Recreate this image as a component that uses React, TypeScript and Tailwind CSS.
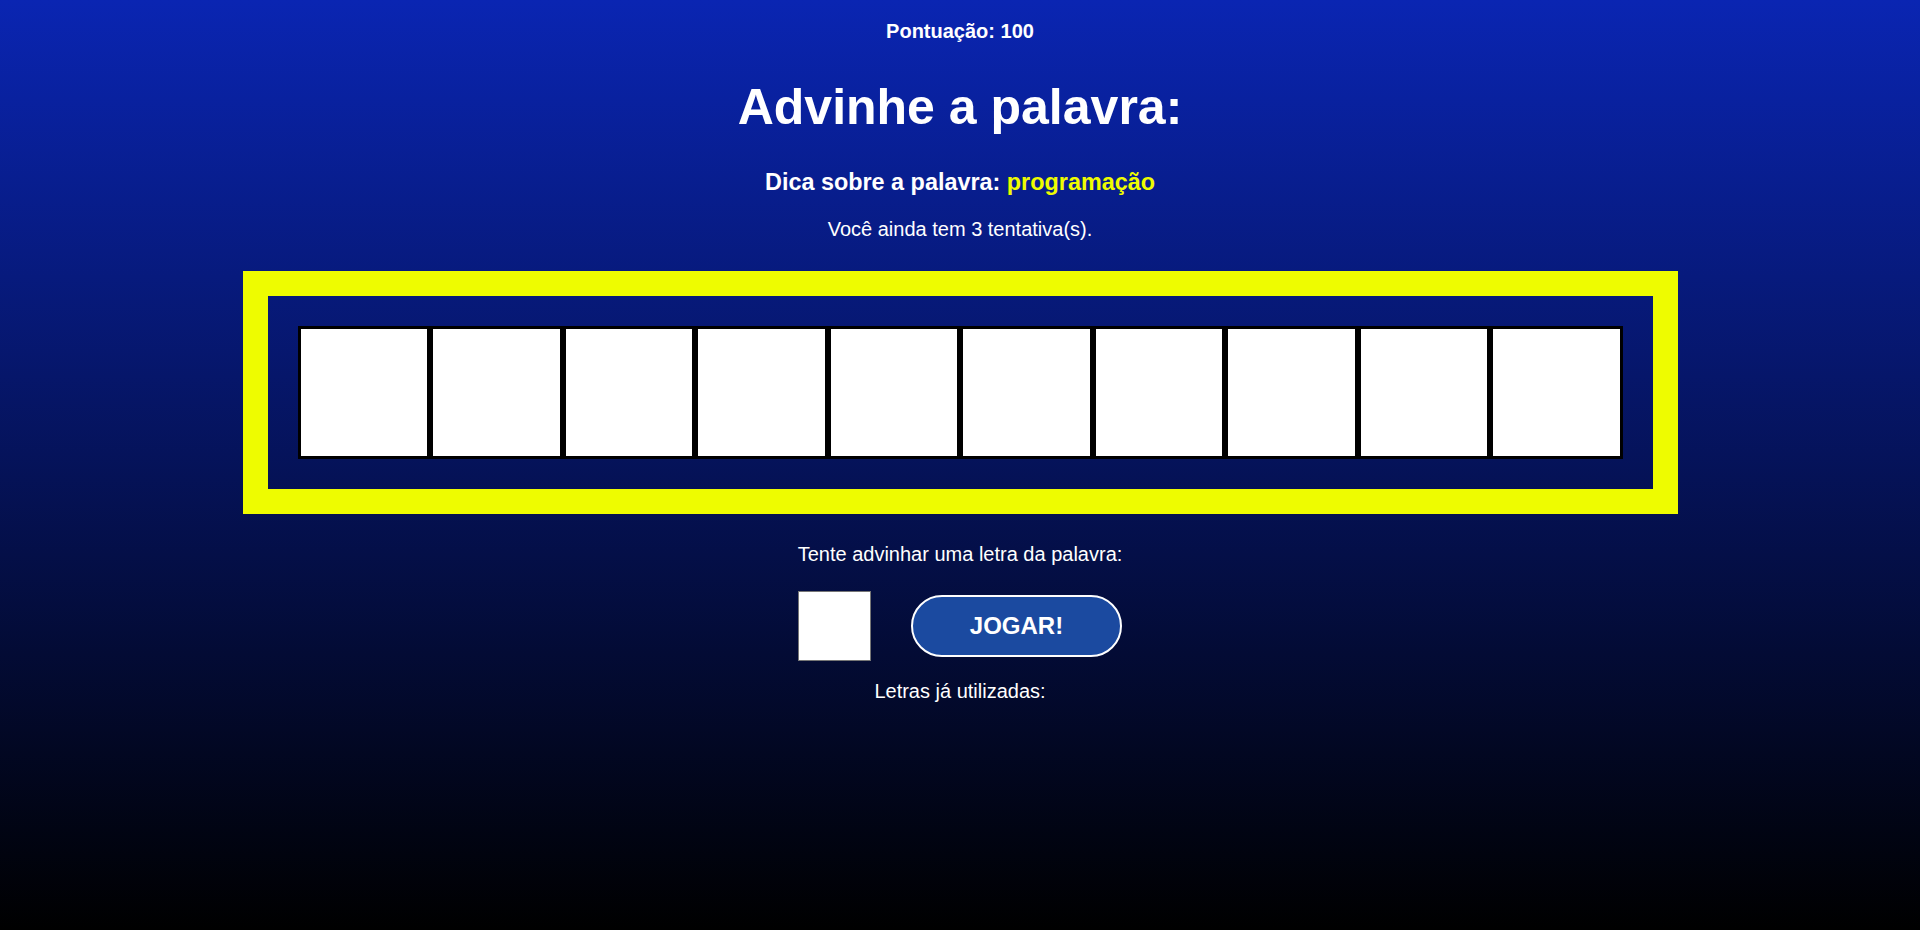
const letters = Array.from({ length: 10 });

export default function App() {
  return (
    <div className="min-h-[930px] w-full flex flex-col items-center bg-[linear-gradient(#0a25b2,#000)] text-white font-['Liberation_Sans',Arial,sans-serif]">
      <p className="mt-[20px] text-[20px] leading-[23px] font-bold">Pontuação: 100</p>

      <h1 className="mt-[35px] text-[50px] leading-[58px] font-bold">Advinhe a palavra:</h1>

      <h3 className="mt-[33px] text-[23.4px] leading-[27px] font-bold">
        Dica sobre a palavra: <span className="text-[#eefc00]">programação</span>
      </h3>

      <p className="mt-[22px] text-[20px] leading-[23px]">Você ainda tem 3 tentativa(s).</p>

      <div className="mt-[30px] w-[1435px] flex border-[25px] border-[#eefc00] p-[30px]">
        {letters.map((_, i) => (
          <div key={i} className="flex-1 h-[133px] bg-white border-[3px] border-black" />
        ))}
      </div>

      <p className="mt-[29px] text-[20px] leading-[23px]">Tente advinhar uma letra da palavra:</p>

      <div className="mt-[25px] flex items-center gap-[40px]">
        <input
          type="text"
          maxLength={1}
          className="w-[73px] h-[70px] bg-white border border-[#767676] text-black text-center text-[32px] outline-none"
        />
        <button className="w-[211px] h-[62px] rounded-full border-2 border-white bg-[#1b4aa0] text-[24px] font-bold text-white">
          JOGAR!
        </button>
      </div>

      <p className="mt-[19px] text-[20px] leading-[23px]">Letras já utilizadas:</p>
    </div>
  );
}
